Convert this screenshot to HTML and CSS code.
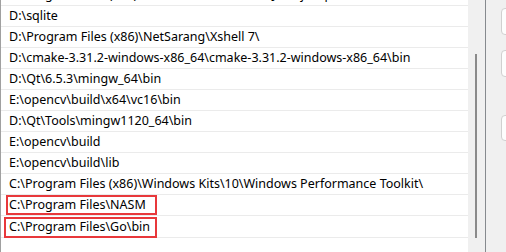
FILE: index.html
```html
<!DOCTYPE html>
<html lang="zh-CN">
<head>
  <meta charset="UTF-8" />
  <title>编辑环境变量</title>
  <link rel="stylesheet" href="styles.css">
</head>
<body>
  <div class="dialog">
    <div class="listbox">
      <div class="list">
        <div class="rows">
          <div class="row">C:\Program Files (x86)\Common Files\Oracle\Java\javapath</div>
          <div class="row">D:\sqlite</div>
          <div class="row">D:\Program Files (x86)\NetSarang\Xshell 7\</div>
          <div class="row">D:\cmake-3.31.2-windows-x86_64\cmake-3.31.2-windows-x86_64\bin</div>
          <div class="row">D:\Qt\6.5.3\mingw_64\bin</div>
          <div class="row">E:\opencv\build\x64\vc16\bin</div>
          <div class="row">D:\Qt\Tools\mingw1120_64\bin</div>
          <div class="row">E:\opencv\build</div>
          <div class="row">E:\opencv\build\lib</div>
          <div class="row">C:\Program Files (x86)\Windows Kits\10\Windows Performance Toolkit\</div>
          <div class="row"><span class="mark mark-nasm">C:\Program Files\NASM</span></div>
          <div class="row"><span class="mark mark-go">C:\Program Files\Go\bin</span></div>
          <div class="row"></div>
        </div>
      </div>
      <div class="scrollbar">
        <div class="thumb"></div>
      </div>
    </div>
    <div class="side">
      <div class="btn"></div>
      <div class="btn btn-edit"></div>
      <div class="btn btn-browse"></div>
    </div>
  </div>
</body>
</html>
```

FILE: styles.css
```css
body { margin: 0; background: #f0f0f0; font-family: "Noto Sans", "Noto Sans CJK SC", sans-serif; font-size: 12.5px; color: #000; }
.dialog { display: flex; height: 252px; overflow: hidden; }
.listbox { display: flex; width: 485px; border-left: 1px solid #a0a0a0; border-right: 1px solid #868a8e; }
.list { width: 467px; background: #fff; overflow: hidden; }
.rows { margin-top: -15px; }
.row { height: 20px; line-height: 20px; border-bottom: 1px solid #ebebeb; padding-left: 8px; white-space: nowrap; }
.row:last-child { border-bottom: none; }
.mark { display: block; box-sizing: border-box; border: 2px solid #e8383b; line-height: 16px; }
.mark-nasm { width: 151px; height: 20px; margin-left: -3px; padding-left: 1px; }
.mark-go { width: 153px; height: 21px; margin-top: 1px; margin-left: -5px; padding-left: 3px; line-height: 15px; }
.scrollbar { width: 17px; background: #f0f0f0; padding-top: 54px; }
.thumb { width: 2px; height: 184px; margin-left: 7px; background: #8a8a8a; }
.side { flex: 1; padding-left: 15px; padding-top: 8px; }
.btn { width: 80px; height: 27px; box-sizing: border-box; border: 1px solid #d0d0d0; border-radius: 4px; background: #fdfdfd; }
.btn-edit { margin-top: 15px; }
.btn-browse { margin-top: 38px; height: 26px; }
```
